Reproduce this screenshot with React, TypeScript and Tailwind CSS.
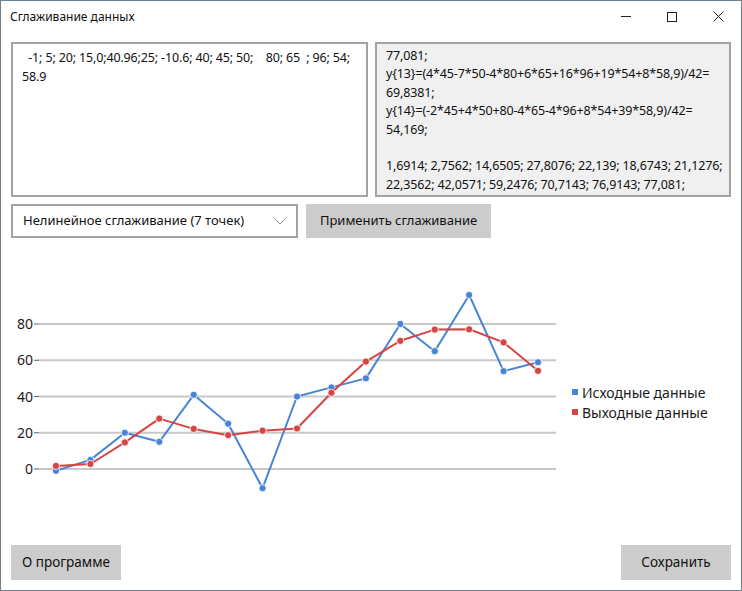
import React from "react";

const blue = [-1, 5, 20, 15, 40.96, 25, -10.6, 40, 45, 50, 80, 65, 96, 54, 58.9];
const red = [1.6914, 2.7562, 14.6505, 27.8076, 22.139, 18.6743, 21.1276, 22.3562, 42.0571, 59.2476, 70.7143, 76.9143, 77.081, 69.8381, 54.169];

const OX = 11;
const OY = 238;
const px = (i: number) => 56 + i * 34.43 - OX;
const py = (v: number) => 469 - v * 1.8125 - OY;

function Series({ data, color }: { data: number[]; color: string }) {
  const pts = data.map((v, i) => `${px(i).toFixed(1)},${py(v).toFixed(1)}`).join(" ");
  return (
    <g>
      <polyline points={pts} fill="none" stroke={color} strokeWidth={2} strokeLinejoin="round" />
      {data.map((v, i) => (
        <circle key={i} cx={px(i)} cy={py(v)} r={3.6} fill={color} stroke="#ffffff" strokeWidth={0.8} />
      ))}
    </g>
  );
}

function Chart() {
  const ticks = [80, 60, 40, 20, 0];
  return (
    <svg width={720} height={307} className="block" style={{ fontFamily: '"Noto Sans", sans-serif' }}>
      {ticks.map((t) => (
        <g key={t}>
          <line x1={39 - OX} x2={556 - OX} y1={py(t)} y2={py(t)} stroke="#c8c8c8" strokeWidth={2} />
          <line x1={34 - OX} x2={39 - OX} y1={py(t)} y2={py(t)} stroke="#606060" strokeWidth={1} />
          <text x={33 - OX} y={py(t) + 5} textAnchor="end" fontSize={14} fill="#1a1a1a">
            {t}
          </text>
        </g>
      ))}
      <Series data={blue} color="#4a84d4" />
      <Series data={red} color="#d64444" />
      <rect x={572 - OX} y={389 - OY} width={6} height={6} fill="#4a84d4" />
      <text x={582 - OX} y={398 - OY} fontSize={14} fill="#1a1a1a">Исходные данные</text>
      <rect x={572 - OX} y={409 - OY} width={6} height={6} fill="#d64444" />
      <text x={582 - OX} y={418 - OY} fontSize={14} fill="#1a1a1a">Выходные данные</text>
    </svg>
  );
}

export default function App() {
  return (
    <div
      className="w-[742px] h-[591px] border border-[#6f7f8b] bg-white flex flex-col text-[#111]"
      style={{ fontFamily: '"Noto Sans", sans-serif' }}
    >
      <div className="h-[31px] flex items-center justify-between shrink-0">
        <span className="pl-[9px] text-[12px]">Сглаживание данных</span>
        <div className="flex items-center h-full">
          <div className="w-[46px] h-full flex items-center justify-center">
            <div className="w-[10px] h-px bg-[#222]" />
          </div>
          <div className="w-[46px] h-full flex items-center justify-center">
            <div className="w-[10px] h-[10px] border border-[#222]" />
          </div>
          <div className="w-[46px] h-full flex items-center justify-center">
            <svg width="11" height="11" viewBox="0 0 11 11">
              <path d="M0.5 0.5 L10.5 10.5 M10.5 0.5 L0.5 10.5" stroke="#222" strokeWidth="1" />
            </svg>
          </div>
        </div>
      </div>
      <div className="flex-1 flex flex-col px-[10px] pt-[10px] pb-[10px]">
        <div className="flex gap-[7px] h-[155px]">
          <div className="w-[357px] h-full border-2 border-[#a3a3a3] bg-white px-[9px] pt-[5px] text-[12.5px] tracking-[-0.15px] leading-[18.5px] whitespace-pre overflow-hidden">
            {"  -1; 5; 20; 15,0;40.96;25; -10.6; 40; 45; 50;    80; 65  ; 96; 54;\n58.9"}
          </div>
          <div className="w-[356px] h-full border-2 border-[#a3a3a3] bg-[#f0f0f0] px-[9px] pt-[3px] text-[12.5px] tracking-[-0.15px] leading-[18.4px] whitespace-pre overflow-hidden">
            {"77,081;\ny{13}=(4*45-7*50-4*80+6*65+16*96+19*54+8*58,9)/42=\n69,8381;\ny{14}=(-2*45+4*50+80-4*65-4*96+8*54+39*58,9)/42=\n54,169;\n\n1,6914; 2,7562; 14,6505; 27,8076; 22,139; 18,6743; 21,1276;\n22,3562; 42,0571; 59,2476; 70,7143; 76,9143; 77,081;"}
          </div>
        </div>
        <div className="flex gap-[8px] mt-[7px] h-[34px]">
          <div className="w-[287px] h-full border-2 border-[#a3a3a3] bg-white flex items-center justify-between pl-[10px] pr-[10px] text-[13px]">
            <span>Нелинейное сглаживание (7 точек)</span>
            <svg width="12" height="7" viewBox="0 0 12 7">
              <path d="M0.5 0.5 L6 6 L11.5 0.5" fill="none" stroke="#8a8a8a" strokeWidth="1" />
            </svg>
          </div>
          <div className="w-[185px] h-full bg-[#cccccc] flex items-center justify-center text-[13px]">
            Применить сглаживание
          </div>
        </div>
        <div className="h-[307px]">
          <Chart />
        </div>
        <div className="flex justify-between h-[35px]">
          <div className="w-[110px] h-full bg-[#cccccc] flex items-center justify-center text-[13.5px]">
            О программе
          </div>
          <div className="w-[110px] h-full bg-[#cccccc] flex items-center justify-center text-[13.5px]">
            Сохранить
          </div>
        </div>
      </div>
    </div>
  );
}
